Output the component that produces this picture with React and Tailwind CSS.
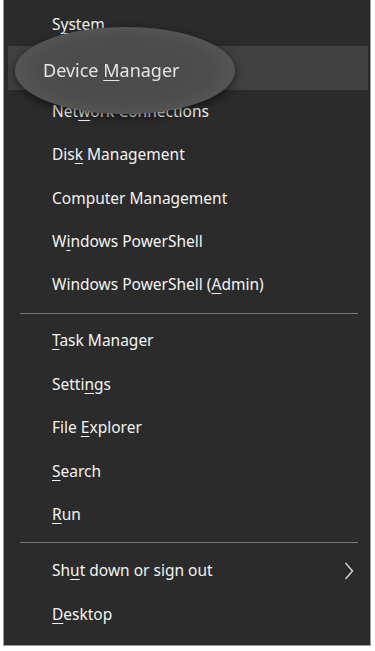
const items = [
  ["S", "y", "stem"],
  ["", "", ""],
  ["Net", "w", "ork Connections"],
  ["Dis", "k", " Management"],
  ["Computer Management", "", ""],
  ["W", "i", "ndows PowerShell"],
  ["Windows PowerShell (", "A", "dmin)"],
  "sep",
  ["", "T", "ask Manager"],
  ["Setti", "n", "gs"],
  ["File ", "E", "xplorer"],
  ["", "S", "earch"],
  ["", "R", "un"],
  "sep",
  ["Sh", "u", "t down or sign out"],
  ["", "D", "esktop"],
];

function Label({ parts }) {
  const [a, k, b] = parts;
  return (
    <span>
      {a}
      {k && <span className="underline underline-offset-[3px] decoration-1">{k}</span>}
      {b}
    </span>
  );
}

export default function App() {
  return (
    <div className="min-h-[651px] bg-white pl-[3px] font-['Noto_Sans',sans-serif]">
      <div className="relative w-[368px] h-[646px] bg-[#2b2b2b] border-l border-r border-b border-[#9b9b9b] pt-[3px] pl-[4px] pr-[2px]">
        {items.map((it, i) =>
          it === "sep" ? (
            <div key={i} className="h-[12.7px] flex items-center pl-[12px] pr-[10px]">
              <div className="h-px w-full bg-[#7a7a7a]" />
            </div>
          ) : (
            <div
              key={i}
              className={`h-[43.4px] flex items-center pl-[44px] pr-[14px] text-[15.5px] text-[#f3f3f3] ${i === 1 ? "bg-[#414141]" : ""}`}
            >
              <Label parts={it} />
              {i === 14 && (
                <svg className="ml-auto" width="10" height="18" viewBox="0 0 10 18">
                  <polyline points="1.5,1 8.5,9 1.5,17" fill="none" stroke="#d8d8d8" strokeWidth="1.4" />
                </svg>
              )}
            </div>
          )
        )}

        {/* magnifier glow over Device Manager */}
        <div className="absolute left-[11px] top-[27px] w-[220px] h-[87px] rounded-[50%] bg-[radial-gradient(ellipse_at_center,#4a4a4a_0%,#4d4d4d_55%,#595959_80%,#676767_92%,rgba(90,90,90,0)_100%)] shadow-[0_3px_10px_rgba(0,0,0,0.55)] flex items-center pl-[28px]">
          <span className="text-[18px] text-[#e4e4e4] blur-[0.4px]">
            Device <span className="underline underline-offset-[3px] decoration-1">M</span>anager
          </span>
        </div>
      </div>
    </div>
  );
}
